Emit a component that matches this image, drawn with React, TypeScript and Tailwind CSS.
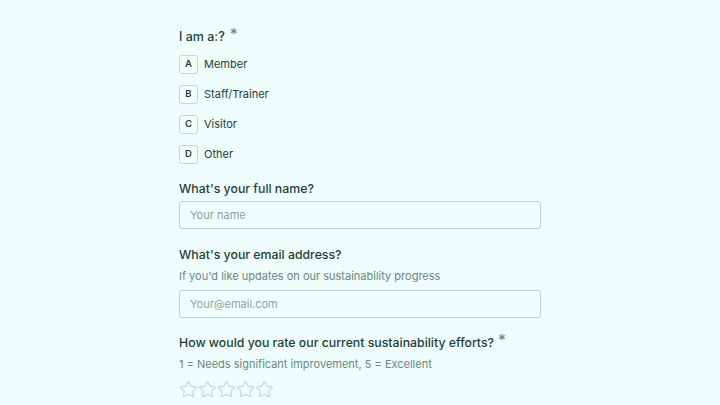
import { Star } from 'lucide-react';

const options = [
  { key: 'A', label: 'Member' },
  { key: 'B', label: 'Staff/Trainer' },
  { key: 'C', label: 'Visitor' },
  { key: 'D', label: 'Other' },
];

const inputCls =
  'h-[28px] w-full rounded-[3px] border border-[#b9d3d0] bg-[#effdfc] px-[10px] text-[11px] text-[#1f3d3a] placeholder:text-[#8aa5a2] focus:outline-none';

export default function App() {
  return (
    <div className="min-h-[405px] w-full bg-[#effdfc] font-['Inter',sans-serif] text-[#1f3d3a]">
      <div className="mx-auto w-[362px] pt-[28px]">
        <div className="flex items-start text-[12.5px] font-medium leading-[18px]">
          I am a:?<span className="ml-[5px] mt-[-2px] text-[15px] leading-[15px] text-[#6b8784]">*</span>
        </div>
        <div className="mt-[9px] flex flex-col gap-[11px]">
          {options.map(o => (
            <div key={o.key} className="flex items-center gap-[6px]">
              <span className="flex h-[19px] w-[19px] items-center justify-center rounded-[3px] border border-[#c5d8d6] bg-[#f4fdfc] text-[9.5px] font-semibold text-[#1f3d3a]">
                {o.key}
              </span>
              <span className="text-[11px] leading-[19px]">{o.label}</span>
            </div>
          ))}
        </div>

        <div className="mt-[16px] text-[12.3px] font-medium leading-[18px]">What's your full name?</div>
        <input className={`${inputCls} mt-[3px]`} placeholder="Your name" />

        <div className="mt-[17px] text-[12.3px] font-medium leading-[18px]">What's your email address?</div>
        <div className="mt-[4px] text-[11px] leading-[16px] text-[#6b8784]">If you'd like updates on our sustainability progress</div>
        <input className={`${inputCls} mt-[6px]`} placeholder="Your@email.com" />

        <div className="mt-[16px] flex items-start text-[12.3px] font-medium leading-[18px]">
          How would you rate our current sustainability efforts?
          <span className="ml-[4px] mt-[-2px] text-[15px] leading-[15px] text-[#6b8784]">*</span>
        </div>
        <div className="mt-[4px] text-[11px] leading-[16px] text-[#6b8784]">1 = Needs significant improvement, 5 = Excellent</div>
        <div className="mt-[8px] flex gap-[0px]">
          {[0, 1, 2, 3, 4].map(i => (
            <Star key={i} className="h-[19px] w-[19px] text-[#c4d1d0]" strokeWidth={1.3} />
          ))}
        </div>
      </div>
    </div>
  );
}
